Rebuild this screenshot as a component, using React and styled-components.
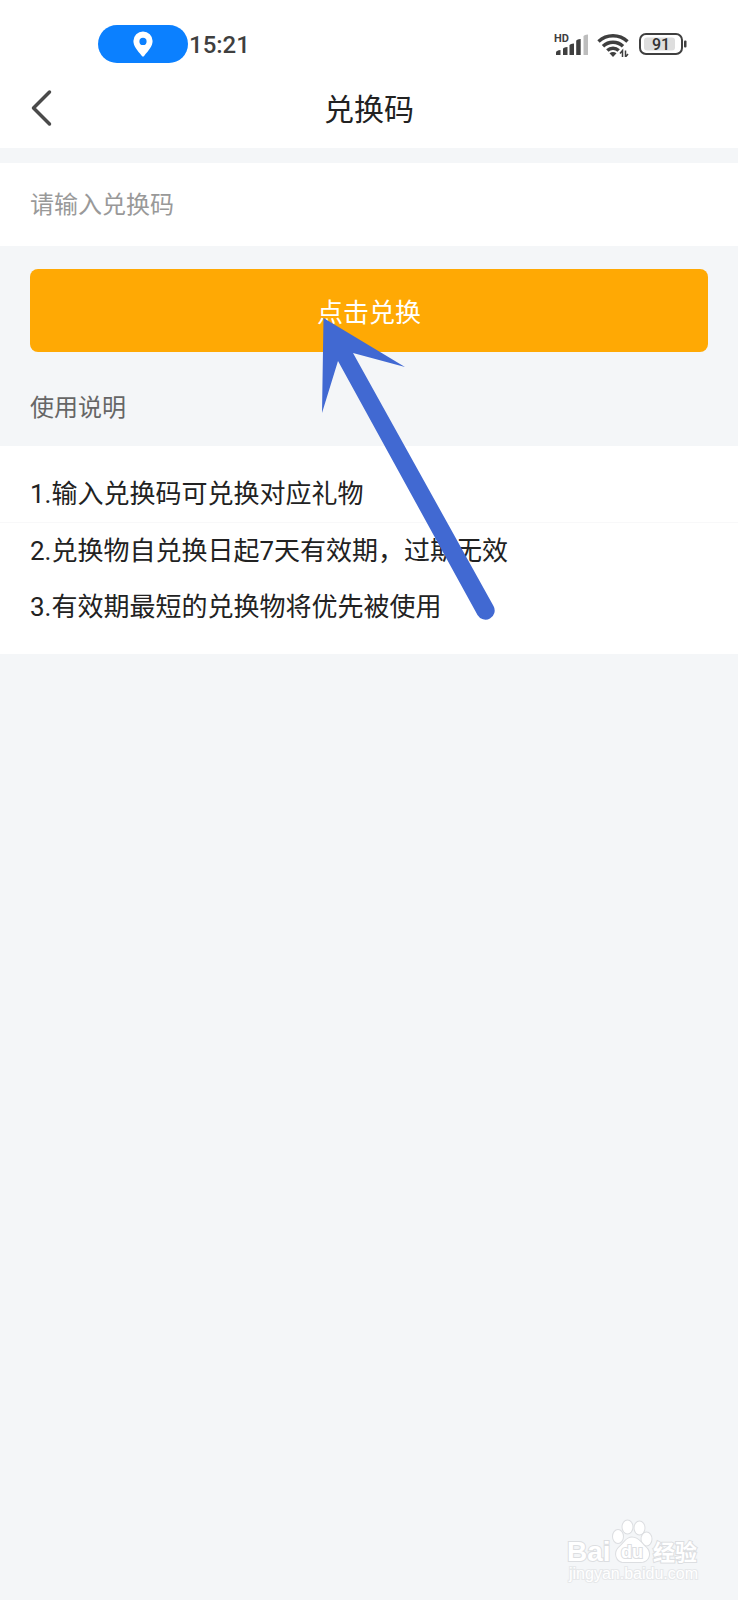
import React, { useState } from 'react';
import styled, { createGlobalStyle } from 'styled-components';

const GlobalStyle = createGlobalStyle`
  * {
    box-sizing: border-box;
  }

  body {
    margin: 0;
    background-color: #f4f6f8;
    color: #222;
    font-family: Roboto, 'Noto Sans CJK SC', sans-serif;
    font-size: 26px;
  }

  button,
  input {
    padding: 0;
    border: 0;
    font: inherit;
  }
`;

const StyledPage = styled.div`
  position: relative;
  display: flex;
  flex-direction: column;
  min-height: 100vh;
  overflow: hidden;
`;

const StyledStatusBar = styled.div`
  display: flex;
  align-items: center;
  justify-content: space-between;
  padding: 25px 51px 9px 98px;
  background-color: #fff;

  .left {
    display: flex;
    align-items: center;
    gap: 1px;
  }

  .right {
    display: flex;
    align-items: center;
    gap: 8px;
  }

  svg {
    display: block;
  }
`;
const StyledPill = styled.div`
  display: flex;
  align-items: center;
  justify-content: center;
  width: 90px;
  height: 38px;
  border-radius: 19px;
  background-color: #0b80ff;
`;
const StyledTime = styled.time`
  padding-top: 2px;
  color: #3f3f3f;
  font-size: 24px;
  font-weight: 500;
  line-height: 36px;
`;

const StyledHeader = styled.header`
  display: grid;
  grid-template-columns: 60px 1fr 60px;
  align-items: center;
  height: 76px;
  background-color: #fff;

  h1 {
    margin: 0;
    font-size: 30px;
    font-weight: 400;
    line-height: 40px;
    text-align: center;
  }
`;
const StyledBackButton = styled.button`
  display: flex;
  align-items: center;
  height: 60px;
  padding: 0 0 4px 30px;
  background: none;
  cursor: pointer;
`;

const StyledForm = styled.form`
  display: flex;
  flex-direction: column;
  margin-top: 15px;
`;
const StyledInput = styled.input`
  width: 100%;
  height: 83px;
  padding: 0 30px;
  background-color: #fff;
  color: #222;
  font-size: 24px;
  outline: 0;

  &::placeholder {
    color: #999;
    opacity: 1;
  }
`;
const StyledSubmit = styled.button`
  height: 83px;
  margin: 23px 30px 0;
  border-radius: 8px;
  background-color: #ffa904;
  color: #fff;
  cursor: pointer;
`;

const StyledNotes = styled.section`
  h2 {
    margin: 0;
    padding: 36px 30px 18px;
    color: #666;
    font-size: 24px;
    font-weight: 400;
    line-height: 40px;
  }

  ol {
    margin: 0;
    padding: 20px 0 19px;
    background-color: #fff;
    list-style: none;
  }

  li {
    padding: 0 30px;
    line-height: 56px;
  }

  li:first-child {
    border-bottom: 1px solid #f8f8f9;
  }
`;

const StyledPointer = styled.svg`
  position: absolute;
  top: 316px;
  left: calc(50% - 49px);
  pointer-events: none;
`;
const StyledWatermark = styled.svg`
  position: absolute;
  right: 38px;
  bottom: 12px;
  pointer-events: none;

  text,
  g {
    fill: #fff;
    stroke: #dcdee1;
    stroke-width: 2px;
    paint-order: stroke;
  }

  .brand {
    font: bold 28px 'Liberation Sans', sans-serif;
  }

  .du {
    font: bold 18px 'Liberation Sans', sans-serif;
  }

  .cn {
    font: bold 22px 'Noto Sans CJK SC', sans-serif;
  }

  .url {
    stroke: #e6e8ea;
    font: 16px 'Liberation Sans', sans-serif;
  }
`;

const PinIcon = () => (
  <svg width="20" height="26" viewBox="0 0 20 26" aria-hidden="true">
    <path
      fill="#fff"
      fillRule="evenodd"
      d="M10 .5a9.6 9.6 0 0 0-9.6 9.6c0 5 3.8 9.5 8.5 14.8.6.7 1.6.7 2.2 0 4.7-5.3 8.5-9.8 8.5-14.8A9.6 9.6 0 0 0 10 .5zm0 6.3a3.600 3.600 0 1 1 0 7.200 3.600 3.600 0 0 1 0-7.200z"
    />
  </svg>
);

const SignalIcon = () => (
  <svg width="35" height="24" viewBox="0 0 35 24" aria-label="HD">
    <text x="0" y="10" fill="#3f3f3f" fontSize="11" fontWeight="700">
      HD
    </text>
    <g fill="#3f3f3f">
      <path d="M2 23v-2.500q0-2 4.500-2.500v5z" />
      <path d="M9 23v-6q0-1.500 4.500-2v8z" />
      <path d="M15.500 23v-9.500q0-1.500 4.500-2v11.500z" />
      <path d="M22.200 23v-14q0-1.500 4.500-2v16z" />
    </g>
    <path fill="#bdbdbd" d="M29.500 23v-18.500q0-1.500 4.500-2v20.500z" />
  </svg>
);

const WifiIcon = () => (
  <svg width="34" height="26" viewBox="0 0 34 26" aria-hidden="true">
    <g fill="none" stroke="#3f3f3f" strokeWidth="3.400">
      <path d="M1.500 10.500a21 21 0 0 1 29 0" />
      <path d="M6 15.300a14.500 14.500 0 0 1 20 0" />
      <path d="M10.300 19.500a8.200 8.200 0 0 1 11.400 0" />
    </g>
    <path fill="#3f3f3f" d="M12.500 22.300q3.500-2.600 7 0L16 26z" />
    <path fill="none" stroke="#3f3f3f" strokeWidth="1.500" d="M25.500 26v-6.500l-2.500 3M28.500 19.500v6.500l2.500-3" />
  </svg>
);

const BatteryIcon = () => (
  <svg width="48" height="22" viewBox="0 0 48 22" aria-label="91%">
    <rect x="1" y="1" width="42" height="20" rx="6" fill="#fff" stroke="#3f3f3f" strokeWidth="2" />
    <rect x="5" y="4.500" width="31" height="13" rx="3" fill="#dedede" />
    <rect x="45" y="7.500" width="2.500" height="7" rx="1" fill="#3f3f3f" />
    <text x="22" y="16.500" fill="#333" fontSize="16" fontWeight="500" textAnchor="middle">
      91
    </text>
  </svg>
);

const notes = [
  '1.输入兑换码可兑换对应礼物',
  '2.兑换物自兑换日起7天有效期，过期无效',
  '3.有效期最短的兑换物将优先被使用',
];

const App = () => {
  const [code, setCode] = useState('');

  return (
    <StyledPage>
      <GlobalStyle />

      <StyledStatusBar>
        <div className="left">
          <StyledPill>
            <PinIcon />
          </StyledPill>
          <StyledTime>15:21</StyledTime>
        </div>
        <div className="right">
          <SignalIcon />
          <WifiIcon />
          <BatteryIcon />
        </div>
      </StyledStatusBar>

      <StyledHeader>
        <StyledBackButton type="button" aria-label="返回">
          <svg width="22" height="38" viewBox="0 0 22 38">
            <path
              d="M19.500 3 3.500 19l16 16"
              fill="none"
              stroke="#4a4a4a"
              strokeWidth="3.500"
              strokeLinecap="round"
              strokeLinejoin="round"
            />
          </svg>
        </StyledBackButton>
        <h1>兑换码</h1>
      </StyledHeader>

      <StyledForm onSubmit={e => e.preventDefault()}>
        <StyledInput
          type="text"
          aria-label="兑换码"
          placeholder="请输入兑换码"
          value={code}
          onChange={e => setCode(e.target.value)}
        />
        <StyledSubmit type="submit">点击兑换</StyledSubmit>
      </StyledForm>

      <StyledNotes>
        <h2>使用说明</h2>
        <ol>{notes && notes.map((note, i) => <li key={i}>{note}</li>)}</ol>
      </StyledNotes>

      <StyledPointer width="178" height="306" viewBox="0 0 178 306" aria-hidden="true">
        <path
          fill="#4169d2"
          d="M3.500 2 85 51 33 37 173.500 290a9 9 0 0 1-16 9L18 45 2 97z"
        />
      </StyledPointer>

      <StyledWatermark width="134" height="70" viewBox="0 0 134 70">
        <text className="brand" x="1" y="43">
          Bai
        </text>
        <g>
          <ellipse cx="52" cy="18.500" rx="5" ry="6.500" />
          <ellipse cx="61.500" cy="9" rx="5" ry="6.500" />
          <ellipse cx="73.500" cy="10" rx="5" ry="6.500" />
          <ellipse cx="80.500" cy="21" rx="5" ry="6.500" />
          <path d="M66 19.500c-6 0-8 6-12.500 9.500-6 5-3.500 15 4.500 15h17c8 0 11-9.500 4.500-15-4.500-4-7-9.500-13.500-9.500z" />
        </g>
        <text className="du" x="66" y="40" textAnchor="middle">
          du
        </text>
        <text className="cn" x="87" y="42">
          经验
        </text>
        <text className="url" x="3" y="61">
          jingyan.baidu.com
        </text>
      </StyledWatermark>
    </StyledPage>
  );
};

export default App;
